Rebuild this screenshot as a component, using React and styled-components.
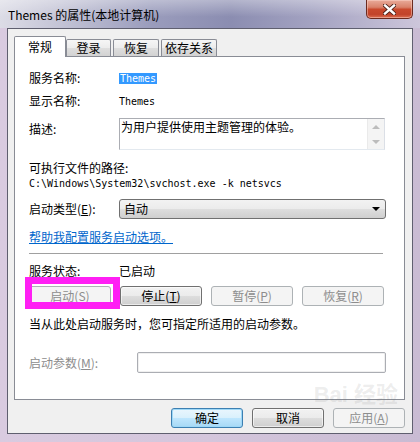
import React from "react";
import styled, { createGlobalStyle } from "styled-components";

const GlobalStyle = createGlobalStyle`
  html, body {
    margin: 0;
    padding: 0;
  }
  body {
    font-family: "Noto Sans CJK SC", "Liberation Sans", sans-serif;
    font-size: 12px;
    color: #000;
  }
`;

const Window = styled.div`
  position: relative;
  width: 420px;
  height: 442px;
  box-sizing: border-box;
  display: flex;
  flex-direction: column;
  overflow: hidden;
  background: linear-gradient(90deg, #d9cbe0 0%, #d4c6dc 50%, #c9bbd3 100%);
`;

const TitleBar = styled.div`
  height: 28px;
  flex-shrink: 0;
  display: flex;
  justify-content: space-between;
  align-items: flex-start;
  background:
    linear-gradient(180deg, rgba(255, 255, 255, 0.35) 0%, rgba(255, 255, 255, 0) 60%),
    linear-gradient(90deg, #dcdce6 0%, #c4c4d6 14%, #9a9cbc 36%, #8b8db1 55%, #a3a2c1 74%, #cdc6db 100%);
`;

const Title = styled.div`
  margin: 7px 0 0 8px;
  font-size: 12px;
  line-height: 16px;
  color: #000;
`;

const CloseButton = styled.div`
  width: 47px;
  height: 19px;
  margin-right: 7px;
  box-sizing: border-box;
  border: 1px solid #6b2a1f;
  border-top: none;
  border-radius: 0 0 5px 5px;
  display: flex;
  align-items: center;
  justify-content: center;
  background: linear-gradient(180deg, #e9ab9a 0%, #d9826b 40%, #c9492d 52%, #c2432a 80%, #dc6f52 100%);
  box-shadow: inset 0 0 0 1px rgba(255, 220, 210, 0.45);
`;

const Frame = styled.div`
  flex: 1;
  display: flex;
  padding: 0 7px 8px 7px;
`;

const Client = styled.div`
  flex: 1;
  display: flex;
  flex-direction: column;
  border: 1px solid #5f5f6f;
  background: #f0f0f0;
  padding: 7px 7px 0 6px;
`;

const TabRow = styled.div`
  display: flex;
  align-items: flex-end;
  height: 21px;
  margin-bottom: -1px;
  position: relative;
  z-index: 1;
`;

const Tab = styled.div`
  box-sizing: border-box;
  width: ${(p) => p.$w}px;
  height: ${(p) => (p.$active ? 21 : 17)}px;
  margin-left: ${(p) => p.$ml || 0}px;
  margin-bottom: ${(p) => (p.$active ? 0 : 1)}px;
  border: 1px solid #898c95;
  border-bottom: none;
  border-radius: 2px 2px 0 0;
  display: flex;
  align-items: center;
  justify-content: center;
  line-height: 14px;
  background: ${(p) =>
    p.$active
      ? "#fff"
      : "linear-gradient(180deg, #f6f6f6 0%, #ececec 50%, #dedede 52%, #d2d2d2 100%)"};
`;

const Panel = styled.div`
  position: relative;
  box-sizing: border-box;
  height: 344px;
  border: 1px solid #898c95;
  background: #fff;
  padding: 14px 18px 0 14px;
  display: flex;
  flex-direction: column;
`;

const Row = styled.div`
  display: flex;
  align-items: ${(p) => (p.$top ? "flex-start" : "center")};
  margin-top: ${(p) => p.$mt || 0}px;
  min-height: 14px;
  line-height: 14px;
`;

const Label = styled.div`
  width: ${(p) => p.$w || 90}px;
  flex-shrink: 0;
  padding-top: ${(p) => p.$pt || 0}px;
  color: ${(p) => (p.$disabled ? "#8d8d8d" : "#000")};
`;

const Mono = styled.span`
  font-family: "DejaVu Sans Mono", "Liberation Mono", monospace;
  font-size: 10px;
  line-height: 11px;
  padding: 0 ${(p) => (p.$selected ? 1 : 0)}px;
  color: ${(p) => (p.$selected ? "#fff" : "#000")};
  background: ${(p) => (p.$selected ? "#3399ff" : "transparent")};
`;

const TextArea = styled.div`
  box-sizing: border-box;
  width: 266px;
  height: 32px;
  display: flex;
  border: 1px solid #abadb3;
  border-right-color: #dbdfe6;
  border-bottom-color: #e3e9ef;
  background: #fff;
`;

const TextAreaText = styled.div`
  flex: 1;
  padding: 1px 0 0 1px;
  line-height: 14px;
`;

const ScrollBar = styled.div`
  width: 16px;
  display: flex;
  flex-direction: column;
  justify-content: space-between;
  align-items: center;
  padding: 6px 0 5px;
  background: #f4f4f4;
  border-left: 1px solid #eaeaea;
`;

const Arrow = styled.div`
  width: 0;
  height: 0;
  border-left: 4px solid transparent;
  border-right: 4px solid transparent;
  ${(p) =>
    p.$up ? "border-bottom: 4px solid #bcbcbc;" : "border-top: 4px solid #bcbcbc;"}
`;

const Select = styled.div`
  box-sizing: border-box;
  width: 267px;
  height: 20px;
  display: flex;
  align-items: center;
  justify-content: space-between;
  padding: 0 4px 0 4px;
  border: 1px solid #707070;
  border-radius: 3px;
  background: linear-gradient(180deg, #f2f2f2 0%, #ebebeb 50%, #dddddd 52%, #cfcfcf 100%);
`;

const SelectArrow = styled.div`
  width: 0;
  height: 0;
  margin-right: 1px;
  border-left: 4px solid transparent;
  border-right: 4px solid transparent;
  border-top: 4px solid #000;
`;

const Link = styled.a`
  color: #0066cc;
  text-decoration: underline;
  cursor: pointer;
`;

const Separator = styled.div`
  height: 1px;
  margin: 9px 3px 0 0;
  background: #a0a0a0;
`;

const ButtonRow = styled.div`
  display: flex;
  gap: 9px;
  margin-top: 8px;
`;

const Button = styled.button`
  box-sizing: border-box;
  width: ${(p) => p.$w || 82}px;
  height: 20px;
  padding: 0;
  font-family: "Noto Sans CJK SC", "Liberation Sans", sans-serif;
  font-size: 12px;
  line-height: 14px;
  color: #000;
  border: 1px solid #707070;
  border-radius: 3px;
  background: linear-gradient(180deg, #f2f2f2 0%, #ebebeb 50%, #dddddd 52%, #cfcfcf 100%);
  box-shadow: inset 0 0 0 1px rgba(255, 255, 255, 0.6);

  &:disabled {
    color: #8d8d8d;
    border-color: #adb2b5;
    background: #f4f4f4;
    box-shadow: none;
  }
`;

const DefaultButton = styled(Button)`
  border-color: #3c7fb1;
  background: linear-gradient(180deg, #eaf6fd 0%, #d9f0fc 50%, #bee6fd 52%, #a7d9f5 100%);
  box-shadow: inset 0 0 0 1px #9ed8f7;
`;

const Highlighted = styled.div`
  position: relative;
`;

const Marker = styled.div`
  position: absolute;
  left: -4px;
  top: -9px;
  width: 95px;
  height: 32px;
  box-sizing: border-box;
  border: 7px solid #ff1ff4;
  pointer-events: none;
`;

const TextInput = styled.div`
  box-sizing: border-box;
  width: 249px;
  height: 21px;
  border: 1px solid #abadb3;
  border-radius: 2px;
  background: #fff;
  box-shadow: inset 0 0 0 1px #f0f0f0;
`;

const Footer = styled.div`
  display: flex;
  justify-content: flex-end;
  gap: 9px;
  padding-top: 8px;
`;

const Watermark = styled.div`
  position: absolute;
  right: 22px;
  top: 384px;
  color: rgba(120, 120, 120, 0.14);
  font-family: "Liberation Sans", "Noto Sans CJK SC", sans-serif;
  font-size: 22px;
  font-weight: bold;
  line-height: 22px;
  pointer-events: none;
`;

const CloseIcon = () => (
  <svg width="13" height="11" viewBox="0 0 13 11">
    <path
      d="M2 1.5 L11 9.5 M11 1.5 L2 9.5"
      stroke="#4a2018"
      strokeWidth="4.2"
      strokeLinecap="square"
    />
    <path
      d="M2 1.5 L11 9.5 M11 1.5 L2 9.5"
      stroke="#fff"
      strokeWidth="2.4"
      strokeLinecap="square"
    />
  </svg>
);

const App = () => {
  return (
    <Window>
      <GlobalStyle />
      <TitleBar>
        <Title>Themes 的属性(本地计算机)</Title>
        <CloseButton>
          <CloseIcon />
        </CloseButton>
      </TitleBar>
      <Frame>
        <Client>
          <TabRow>
            <Tab $w={52} $active>常规</Tab>
            <Tab $w={45}>登录</Tab>
            <Tab $w={46} $ml={2}>恢复</Tab>
            <Tab $w={56} $ml={2}>依存关系</Tab>
          </TabRow>
          <Panel>
            <Row>
              <Label>服务名称:</Label>
              <Mono $selected>Themes</Mono>
            </Row>
            <Row $mt={9}>
              <Label>显示名称:</Label>
              <Mono>Themes</Mono>
            </Row>
            <Row $mt={10} $top>
              <Label $pt={4}>描述:</Label>
              <TextArea>
                <TextAreaText>为用户提供使用主题管理的体验。</TextAreaText>
                <ScrollBar>
                  <Arrow $up />
                  <Arrow />
                </ScrollBar>
              </TextArea>
            </Row>
            <Row $mt={11}>可执行文件的路径:</Row>
            <Row $mt={1}>
              <Mono>C:\Windows\System32\svchost.exe -k netsvcs</Mono>
            </Row>
            <Row $mt={9}>
              <Label>
                启动类型(<u>E</u>):
              </Label>
              <Select>
                <span>自动</span>
                <SelectArrow />
              </Select>
            </Row>
            <Row $mt={11}>
              <Link>帮助我配置服务启动选项。</Link>
            </Row>
            <Separator />
            <Row $mt={10}>
              <Label>服务状态:</Label>
              <span>已启动</span>
            </Row>
            <ButtonRow>
              <Highlighted>
                <Button disabled>
                  启动(<u>S</u>)
                </Button>
                <Marker />
              </Highlighted>
              <Button>
                停止(<u>T</u>)
              </Button>
              <Button disabled>
                暂停(<u>P</u>)
              </Button>
              <Button disabled>
                恢复(<u>R</u>)
              </Button>
            </ButtonRow>
            <Row $mt={11}>当从此处启动服务时，您可指定所适用的启动参数。</Row>
            <Row $mt={21}>
              <Label $w={108} $disabled>
                启动参数(<u>M</u>):
              </Label>
              <TextInput />
            </Row>
          </Panel>
          <Footer>
            <DefaultButton $w={72}>确定</DefaultButton>
            <Button $w={72}>取消</Button>
            <Button $w={72} disabled>
              应用(<u>A</u>)
            </Button>
          </Footer>
        </Client>
      </Frame>
      <Watermark>Bai 经验</Watermark>
    </Window>
  );
};

export default App;
